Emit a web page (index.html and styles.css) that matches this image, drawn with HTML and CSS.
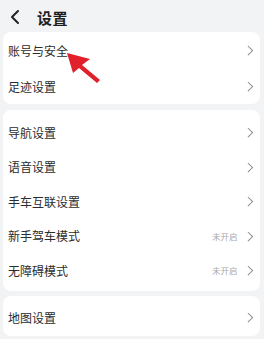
FILE: index.html
```html
<!DOCTYPE html>
<html lang="zh-CN">
<head>
<meta charset="utf-8">
<link rel="stylesheet" href="styles.css">
</head>
<body>
<div class="page">
  <header class="header">
    <svg class="back" width="12" height="16" viewBox="0 0 12 16"><path d="M9 2 L3 8 L9 14" fill="none" stroke="#222" stroke-width="2" stroke-linecap="round" stroke-linejoin="round"/></svg>
    <h1 class="title">设置</h1>
  </header>

  <section class="card card-1">
    <div class="row"><span class="label">账号与安全</span><span class="right"><span class="chev"></span></span></div>
    <div class="row"><span class="label">足迹设置</span><span class="right"><span class="chev"></span></span></div>
  </section>

  <section class="card card-2">
    <div class="row"><span class="label">导航设置</span><span class="right"><span class="chev"></span></span></div>
    <div class="row"><span class="label">语音设置</span><span class="right"><span class="chev"></span></span></div>
    <div class="row"><span class="label">手车互联设置</span><span class="right"><span class="chev"></span></span></div>
    <div class="row"><span class="label">新手驾车模式</span><span class="right"><span class="state">未开启</span><span class="chev"></span></span></div>
    <div class="row"><span class="label">无障碍模式</span><span class="right"><span class="state">未开启</span><span class="chev"></span></span></div>
  </section>

  <section class="card card-3">
    <div class="row"><span class="label">地图设置</span><span class="right"><span class="chev"></span></span></div>
  </section>

  <svg class="arrow" width="264" height="339" viewBox="0 0 264 339">
    <polygon points="67,53 90,59 82,65 100,80 97,83 79,68 73,73" fill="#e0202a"/>
  </svg>
</div>
</body>
</html>
```

FILE: styles.css
```css
* { box-sizing: border-box; margin: 0; padding: 0; }
html, body { width: 264px; height: 339px; overflow: hidden; }
body {
  background: #f2f3f5;
  font-family: "Noto Sans CJK SC", "Noto Sans", sans-serif;
  color: #2a2a2a;
}
.page { position: relative; width: 264px; height: 339px; }
.header {
  height: 32px;
  display: flex;
  align-items: center;
  padding-left: 9px;
}
.back { display: block; margin-top: 1px; }
.title {
  font-size: 15px;
  font-weight: 700;
  margin-left: 16px;
  margin-top: 2px;
  letter-spacing: 0.5px;
  color: #1e1e1e;
}
.card {
  background: #fff;
  margin: 0 4px 0 3px;
  border-radius: 8px;
}
.card-1 { padding: 0; }
.card-2 { margin-top: 6px; padding: 5px 0 3px; }
.card-3 { margin-top: 5px; padding: 4px 0 0; }
.row {
  display: flex;
  align-items: center;
  justify-content: space-between;
  padding: 0 6px 0 5px;
}
.card-1 .row { height: 36px; }
.card-2 .row { height: 34.5px; }
.card-3 .row { height: 36px; }
.label { font-size: 12px; color: #2c2c2c; }
.right { display: flex; align-items: center; }
.state { font-size: 8.5px; color: #a8a8a8; margin-right: 7px; }
.chev {
  width: 6.5px; height: 6.5px;
  border-top: 1.2px solid #8a8a8a;
  border-right: 1.2px solid #8a8a8a;
  transform: rotate(45deg);
  margin-right: 3px;
}
.arrow { position: absolute; left: 0; top: 0; pointer-events: none; }
```
